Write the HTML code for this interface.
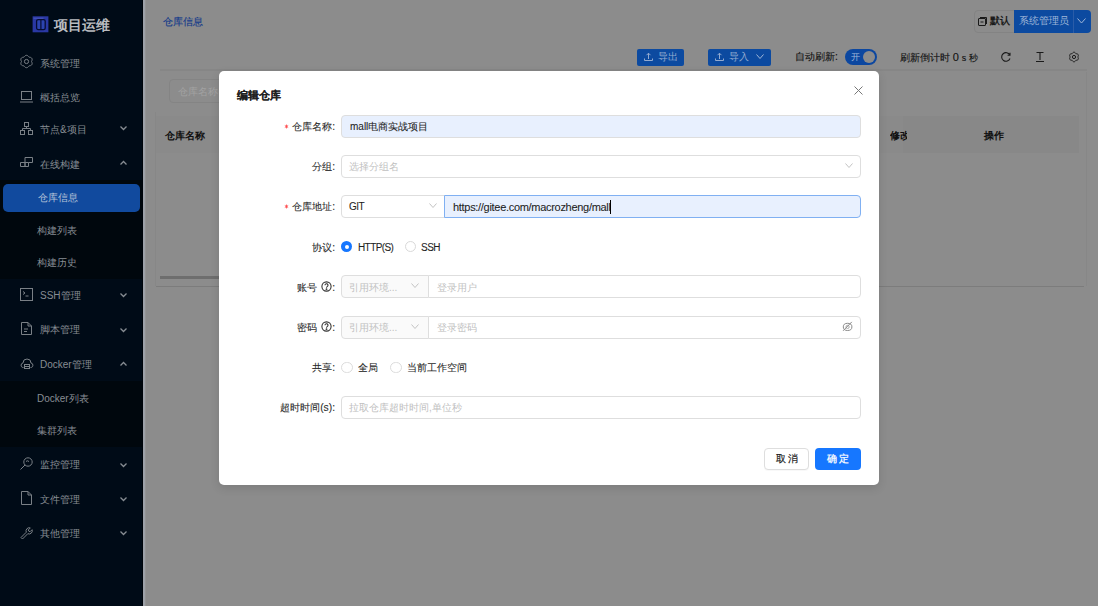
<!DOCTYPE html>
<html><head><meta charset="utf-8">
<style>
*{margin:0;padding:0;box-sizing:border-box;}
html,body{width:1098px;height:606px;overflow:hidden;background:#8c8c8c;font-family:"Liberation Sans",sans-serif;}
.a{position:absolute;}
.t{position:absolute;white-space:nowrap;line-height:14px;font-size:10px;}
#side{left:0;top:0;width:143px;height:606px;background:#000b17;}
.mi{color:#878d93;}
svg{position:absolute;overflow:visible;}
.lbl{color:#2a2a2a;text-align:right;font-size:10.3px;-webkit-text-stroke:0.08px #2a2a2a;}
.inp{position:absolute;border:1px solid #dedede;border-radius:4px;background:#fff;}
.ph{color:#bfbfbf;}
</style></head><body>
<!-- SIDEBAR -->
<div id="side" class="a">
  <div class="a" style="left:0;top:180px;width:144px;height:99px;background:#00070d"></div>
  <div class="a" style="left:0;top:381px;width:144px;height:66px;background:#00070d"></div>
  <!-- logo -->
  <svg style="left:32px;top:16px" width="17" height="17" viewBox="0 0 17 17">
    <rect x="0.6" y="0.3" width="15.8" height="16" fill="#2a38a4"/>
    <rect x="4.6" y="3.6" width="8.6" height="10" rx="1.6" stroke="#060d33" stroke-width="1.3" fill="#2c44b0"/>
    <path d="M8.9 4v9.4" stroke="#060d33" stroke-width="1.2"/>
    <path d="M1.5 2.2h10" stroke="#4c5cc0" stroke-width="0.9"/>
  </svg>
  <div class="t" style="left:54px;top:17px;font-size:14px;line-height:16px;font-weight:bold;color:#b9bcc0">项目运维</div>

  <!-- icons -->
  <g></g>
  <svg style="left:20px;top:55px" width="13" height="13" viewBox="0 0 13 13" fill="none" stroke="#7a8086" stroke-width="1">
    <path d="M6.50 0.30 L7.04 0.37 L7.54 0.58 L8.00 0.91 L8.39 1.31 L8.71 1.75 L9.00 2.17 L9.50 2.21 L10.05 2.27 L10.60 2.40 L11.10 2.64 L11.54 2.97 L11.87 3.40 L12.07 3.90 L12.15 4.44 L12.09 5.00 L11.94 5.54 L11.72 6.04 L11.50 6.50 L11.72 6.96 L11.94 7.46 L12.09 8.00 L12.15 8.56 L12.07 9.10 L11.87 9.60 L11.54 10.03 L11.10 10.36 L10.60 10.60 L10.05 10.73 L9.50 10.79 L9.00 10.83 L8.71 11.25 L8.39 11.69 L8.00 12.09 L7.54 12.42 L7.04 12.63 L6.50 12.70 L5.96 12.63 L5.46 12.42 L5.00 12.09 L4.61 11.69 L4.29 11.25 L4.00 10.83 L3.50 10.79 L2.95 10.73 L2.40 10.60 L1.90 10.36 L1.46 10.03 L1.13 9.60 L0.93 9.10 L0.85 8.56 L0.91 8.00 L1.06 7.46 L1.28 6.96 L1.50 6.50 L1.28 6.04 L1.06 5.54 L0.91 5.00 L0.85 4.44 L0.93 3.90 L1.13 3.40 L1.46 2.97 L1.90 2.64 L2.40 2.40 L2.95 2.27 L3.50 2.21 L4.00 2.17 L4.29 1.75 L4.61 1.31 L5.00 0.91 L5.46 0.58 L5.96 0.37Z"/>
    <circle cx="6.5" cy="6.5" r="2.1"/>
  </svg>
  <svg style="left:20px;top:91px" width="13" height="12" viewBox="0 0 13 12" fill="none" stroke="#7a8086" stroke-width="1">
    <rect x="1.5" y="0.5" width="10" height="8"/><path d="M0 11h13"/>
  </svg>
  <svg style="left:20px;top:122px" width="13" height="13" viewBox="0 0 13 13" fill="none" stroke="#7a8086" stroke-width="1">
    <rect x="4.5" y="0.5" width="4" height="4"/><rect x="0.5" y="8.5" width="4" height="4"/><rect x="8.5" y="8.5" width="4" height="4"/>
    <path d="M6.5 4.5v2M2.5 8.5v-2h8v2"/>
  </svg>
  <svg style="left:20px;top:157px" width="13" height="10" viewBox="0 0 13 10" fill="none" stroke="#7a8086" stroke-width="1">
    <path d="M0.5 9.5v-4h4.5v4zM5 9.5v-4M5 5.5h3.5v4H5M5 5.5V0.5h7.5v5H8.5"/>
  </svg>
  <svg style="left:20px;top:288px" width="13" height="13" viewBox="0 0 13 13" fill="none" stroke="#7a8086" stroke-width="1">
    <rect x="0.5" y="0.5" width="12" height="12"/><path d="M3 3.5l2 1.5-2 1.5M5.5 8h3"/>
  </svg>
  <svg style="left:21px;top:322px" width="11" height="13" viewBox="0 0 11 13" fill="none" stroke="#7a8086" stroke-width="1">
    <path d="M0.5 0.5h6.5l3.5 3.5v8.5h-10z M7 0.5v3.5h3.5 M3 7h4 M3 9.5h3"/>
  </svg>
  <svg style="left:20px;top:358px" width="14" height="12" viewBox="0 0 14 12" fill="none" stroke="#7a8086" stroke-width="1">
    <path d="M3.5 9.5H2.8A2.3 2.3 0 0 1 3 5 4 4 0 0 1 11 5a2.3 2.3 0 0 1 .2 4.5h-.7"/>
    <rect x="4.5" y="6.5" width="5" height="4"/><path d="M4.5 8.5h5"/>
  </svg>
  <svg style="left:20px;top:457px" width="13" height="13" viewBox="0 0 13 13" fill="none" stroke="#7a8086" stroke-width="1">
    <circle cx="8" cy="5" r="4.2"/><path d="M5 8l-4.5 4.5M6 4.5q1-1.5 3 0"/>
  </svg>
  <svg style="left:21px;top:491px" width="11" height="14" viewBox="0 0 11 14" fill="none" stroke="#7a8086" stroke-width="1">
    <path d="M0.5 0.5h6.5l3.5 3.5v9.5h-10z M7 0.5v3.5h3.5"/>
  </svg>
  <svg style="left:20px;top:526px" width="13" height="13" viewBox="0 0 13 13" fill="none" stroke="#7a8086" stroke-width="1">
    <path d="M1 11.5l5.3-5.3a3.2 3.2 0 0 1 4-4.3l-2 2 .5 1.3 1.3.5 2-2a3.2 3.2 0 0 1-4.3 4L2.5 13z"/>
  </svg>
  <!-- arrows -->
  <svg style="left:120px;top:126px" width="7" height="4" viewBox="0 0 7 4" fill="none" stroke="#878d93" stroke-width="1.3"><path d="M0.5 0.5l3 3 3-3"/></svg>
  <svg style="left:120px;top:161px" width="7" height="4" viewBox="0 0 7 4" fill="none" stroke="#878d93" stroke-width="1.3"><path d="M0.5 3.5l3-3 3 3"/></svg>
  <svg style="left:120px;top:293px" width="7" height="4" viewBox="0 0 7 4" fill="none" stroke="#878d93" stroke-width="1.3"><path d="M0.5 0.5l3 3 3-3"/></svg>
  <svg style="left:120px;top:328px" width="7" height="4" viewBox="0 0 7 4" fill="none" stroke="#878d93" stroke-width="1.3"><path d="M0.5 0.5l3 3 3-3"/></svg>
  <svg style="left:120px;top:362px" width="7" height="4" viewBox="0 0 7 4" fill="none" stroke="#878d93" stroke-width="1.3"><path d="M0.5 3.5l3-3 3 3"/></svg>
  <svg style="left:120px;top:463px" width="7" height="4" viewBox="0 0 7 4" fill="none" stroke="#878d93" stroke-width="1.3"><path d="M0.5 0.5l3 3 3-3"/></svg>
  <svg style="left:120px;top:497px" width="7" height="4" viewBox="0 0 7 4" fill="none" stroke="#878d93" stroke-width="1.3"><path d="M0.5 0.5l3 3 3-3"/></svg>
  <svg style="left:120px;top:531px" width="7" height="4" viewBox="0 0 7 4" fill="none" stroke="#878d93" stroke-width="1.3"><path d="M0.5 0.5l3 3 3-3"/></svg>

  <div class="t mi" style="left:40px;top:57px">系统管理</div>
  <div class="t mi" style="left:40px;top:91px">概括总览</div>
  <div class="t mi" style="left:40px;top:123px">节点&amp;项目</div>
  <div class="t mi" style="left:40px;top:158px">在线构建</div>
  <div class="a" style="left:3px;top:184px;width:137px;height:28px;background:#114a9e;border-radius:5px"></div>
  <div class="t" style="left:38px;top:191px;color:#b4c2d8">仓库信息</div>
  <div class="t mi" style="left:37px;top:224px">构建列表</div>
  <div class="t mi" style="left:37px;top:256px">构建历史</div>
  <div class="t mi" style="left:40px;top:289px">SSH管理</div>
  <div class="t mi" style="left:40px;top:323px">脚本管理</div>
  <div class="t mi" style="left:40px;top:358px">Docker管理</div>
  <div class="t mi" style="left:37px;top:392px">Docker列表</div>
  <div class="t mi" style="left:37px;top:424px">集群列表</div>
  <div class="t mi" style="left:40px;top:458px">监控管理</div>
  <div class="t mi" style="left:40px;top:493px">文件管理</div>
  <div class="t mi" style="left:40px;top:527px">其他管理</div>
</div>
<div class="a" style="left:142px;top:0;width:1px;height:606px;background:#00050b"></div><div class="a" style="left:143px;top:0;width:2px;height:606px;background:#9da1a8"></div><div class="a" style="left:145px;top:0;width:1px;height:606px;background:#939393"></div>

<!-- MAIN (dimmed) -->
<div class="t" style="left:163px;top:15px;color:#143a8a;-webkit-text-stroke:0.15px #143a8a">仓库信息</div>
<!-- top right buttons -->
<div class="a" style="left:974px;top:10px;width:41px;height:23px;border:1px solid #838383;border-radius:4px 0 0 4px"></div>
<svg style="left:978px;top:17px" width="9" height="9" viewBox="0 0 9 9" fill="none" stroke="#1a1a1a" stroke-width="1"><rect x="0.5" y="1.5" width="7" height="7" rx="0.5"/><path d="M2 0.5h6.5v6.5M2.5 5h3"/></svg>
<div class="t" style="left:990px;top:14px;color:#1a1a1a;font-weight:bold">默认</div>
<div class="a" style="left:1014px;top:10px;width:77px;height:23px;background:#0c4aa0;border-radius:0 4px 4px 0"></div>
<div class="a" style="left:1073px;top:10px;width:1px;height:23px;background:#2a5ca8"></div>
<div class="t" style="left:1019px;top:14px;color:#9fb6d8">系统管理员</div>
<svg style="left:1077px;top:18px" width="9" height="6" viewBox="0 0 9 6" fill="none" stroke="#9fb6d8" stroke-width="1"><path d="M0.5 0.5l4 4.5 4-4.5"/></svg>



<!-- toolbar -->
<div class="a" style="left:637px;top:49px;width:47px;height:17px;background:#0c4aa0;border-radius:2px"></div>
<svg style="left:644px;top:52px" width="9" height="9" viewBox="0 0 9 9" fill="none" stroke="#93aad0" stroke-width="1"><path d="M4.5 7V1.2M2.5 3.2l2-2 2 2M0.5 6.5v2h8v-2"/></svg>
<div class="t" style="left:658px;top:50px;color:#93aad0">导出</div>
<div class="a" style="left:708px;top:49px;width:63px;height:17px;background:#0c4aa0;border-radius:2px"></div>
<svg style="left:715px;top:52px" width="9" height="9" viewBox="0 0 9 9" fill="none" stroke="#93aad0" stroke-width="1"><path d="M4.5 7V1.2M2.5 3.2l2-2 2 2M0.5 6.5v2h8v-2"/></svg>
<div class="t" style="left:729px;top:50px;color:#93aad0">导入</div>
<svg style="left:756px;top:54px" width="8" height="5" viewBox="0 0 8 5" fill="none" stroke="#9fb6d8" stroke-width="1"><path d="M0.5 0.5l3.5 4 3.5-4"/></svg>
<div class="t" style="left:795px;top:50px;color:#111;font-size:10.3px;-webkit-text-stroke:0.1px #111">自动刷新:</div>
<div class="a" style="left:845px;top:49px;width:32px;height:16px;background:#0c47a0;border-radius:8px"></div>
<div class="a" style="left:863px;top:51px;width:12px;height:12px;background:#8c8c8c;border-radius:6px"></div>
<div class="t" style="left:851px;top:50px;color:#9fb6d8;font-size:9px">开</div>
<div class="t" style="left:900px;top:50px;color:#111;-webkit-text-stroke:0.1px #111">刷新倒计时 <span style="font-size:11px">0</span> <span style="font-size:9px">s</span> <span style="font-size:9px">秒</span></div>
<svg style="left:1001px;top:52px" width="10" height="10" viewBox="0 0 10 10" fill="none" stroke="#1a1a1a" stroke-width="1.1"><path d="M8.8 3A4.3 4.3 0 1 0 9 6.5M9 0.8V3.2H6.6"/></svg>
<svg style="left:1036px;top:52px" width="8" height="10" viewBox="0 0 8 10" fill="none" stroke="#1a1a1a" stroke-width="1.1"><path d="M0.5 0.5h7M4 0.5v7.5M0 9.5h8"/></svg>
<svg style="left:1069px;top:52px" width="10" height="10" viewBox="0 0 10 10" fill="none" stroke="#1a1a1a" stroke-width="1"><path d="M5.00 0.20 L5.41 0.26 L5.81 0.43 L6.15 0.69 L6.45 1.02 L6.69 1.38 L6.90 1.71 L7.29 1.73 L7.72 1.76 L8.15 1.85 L8.56 2.02 L8.90 2.27 L9.16 2.60 L9.31 2.99 L9.36 3.41 L9.31 3.85 L9.17 4.26 L8.98 4.65 L8.80 5.00 L8.98 5.35 L9.17 5.74 L9.31 6.15 L9.36 6.59 L9.31 7.01 L9.16 7.40 L8.90 7.73 L8.56 7.98 L8.15 8.15 L7.72 8.24 L7.29 8.27 L6.90 8.29 L6.69 8.62 L6.45 8.98 L6.15 9.31 L5.81 9.57 L5.41 9.74 L5.00 9.80 L4.59 9.74 L4.19 9.57 L3.85 9.31 L3.55 8.98 L3.31 8.62 L3.10 8.29 L2.71 8.27 L2.28 8.24 L1.85 8.15 L1.44 7.98 L1.10 7.73 L0.84 7.40 L0.69 7.01 L0.64 6.59 L0.69 6.15 L0.83 5.74 L1.02 5.35 L1.20 5.00 L1.02 4.65 L0.83 4.26 L0.69 3.85 L0.64 3.41 L0.69 2.99 L0.84 2.60 L1.10 2.27 L1.44 2.02 L1.85 1.85 L2.28 1.76 L2.71 1.73 L3.10 1.71 L3.31 1.38 L3.55 1.02 L3.85 0.69 L4.19 0.43 L4.59 0.26Z"/><circle cx="5" cy="5" r="1.6"/></svg>

<!-- search + table -->
<div class="a" style="left:169px;top:79px;width:60px;height:24px;border:1px solid #848484;border-radius:4px"></div>
<div class="t" style="left:178px;top:85px;color:#a2a2a2">仓库名称</div>
<div class="a" style="left:160px;top:69px;width:927px;height:2px;background:#868686"></div><div class="a" style="left:155px;top:112px;width:1px;height:174px;background:#878787"></div><div class="a" style="left:1086px;top:72px;width:1px;height:214px;background:#878787"></div>
<div class="a" style="left:156px;top:116px;width:750px;height:37px;background:#8a8a8a"></div>
<div class="a" style="left:903px;top:116px;width:176px;height:37px;background:#888"></div>
<div class="t" style="left:165px;top:129px;color:#111;font-weight:bold;font-size:10.3px">仓库名称</div>
<div class="a" style="left:890px;top:128px;width:17px;height:16px;overflow:hidden"><div class="t" style="left:0;top:1px;color:#111;font-weight:bold;font-size:10.3px">修改</div></div>
<div class="t" style="left:984px;top:129px;color:#111;font-weight:bold;font-size:10.3px">操作</div>
<div class="a" style="left:160px;top:276px;width:700px;height:3px;background:#6e6e6e"></div>
<div class="a" style="left:156px;top:286px;width:928px;height:1px;background:#7c7c7c"></div>
<!-- MODAL -->
<div class="a" id="modal" style="left:219px;top:71px;width:660px;height:414px;background:#fff;border-radius:5px;box-shadow:0 3px 10px rgba(0,0,0,0.12)">
  <div class="t" style="left:18px;top:16px;font-size:11.1px;line-height:16px;font-weight:bold;color:#1f1f1f;-webkit-text-stroke:0.08px #1f1f1f">编辑仓库</div>
  <svg style="left:635px;top:15px" width="9" height="9" viewBox="0 0 9 9" fill="none" stroke="#777" stroke-width="1"><path d="M0.5 0.5l8 8M8.5 0.5l-8 8"/></svg>
</div>

<!-- FORM -->
<svg style="left:284px;top:124px" width="5" height="5" viewBox="0 0 5 5" fill="none" stroke="#ff4d4f" stroke-width="0.9"><path d="M2.5 0.6v3.8M0.85 1.55l3.3 1.9M0.85 3.45l3.3-1.9"/></svg>
<div class="t lbl" style="left:275px;width:60px;top:120px">仓库名称:</div>
<div class="inp" style="left:341px;top:115px;width:520px;height:23px;background:#e8f0fe"></div>
<div class="t" style="left:350px;top:120px;color:#1f1f1f;-webkit-text-stroke:0.08px #1f1f1f">mall电商实战项目</div>

<div class="t lbl" style="left:275px;width:60px;top:160px">分组:</div>
<div class="inp" style="left:341px;top:155px;width:520px;height:23px"></div>
<div class="t ph" style="left:349px;top:160px">选择分组名</div>
<svg style="left:845px;top:163px" width="8" height="5" viewBox="0 0 8 5" fill="none" stroke="#c4c4c4" stroke-width="1"><path d="M0.5 0.5l3.5 4 3.5-4"/></svg>

<svg style="left:284px;top:204px" width="5" height="5" viewBox="0 0 5 5" fill="none" stroke="#ff4d4f" stroke-width="0.9"><path d="M2.5 0.6v3.8M0.85 1.55l3.3 1.9M0.85 3.45l3.3-1.9"/></svg>
<div class="t lbl" style="left:275px;width:60px;top:200px">仓库地址:</div>
<div class="inp" style="left:341px;top:195px;width:104px;height:23px;border-radius:4px 0 0 4px"></div>
<div class="t" style="left:349px;top:200px;color:#1f1f1f;-webkit-text-stroke:0.08px #1f1f1f;letter-spacing:-0.5px">GIT</div>
<svg style="left:429px;top:203px" width="8" height="5" viewBox="0 0 8 5" fill="none" stroke="#c4c4c4" stroke-width="1"><path d="M0.5 0.5l3.5 4 3.5-4"/></svg>
<div class="inp" style="left:444px;top:195px;width:417px;height:23px;background:#e8f0fe;border-color:#80b0f2;border-radius:0 4px 4px 0"></div>
<div class="t" style="left:453px;top:200px;color:#1f1f1f;-webkit-text-stroke:0.08px #1f1f1f;font-size:11px;letter-spacing:-0.3px">https://gitee.com/macrozheng/mall</div>
<div class="a" style="left:610px;top:200px;width:1px;height:14px;background:#000"></div>

<div class="t lbl" style="left:275px;width:60px;top:241px">协议:</div>
<div class="a" style="left:341px;top:241px;width:11px;height:11px;border-radius:50%;background:#1677ff"></div>
<div class="a" style="left:344.5px;top:244.5px;width:4px;height:4px;border-radius:50%;background:#fff"></div>
<div class="t" style="left:358px;top:241px;color:#1f1f1f;-webkit-text-stroke:0.08px #1f1f1f;letter-spacing:-0.6px">HTTP(S)</div>
<div class="a" style="left:405px;top:241px;width:11px;height:11px;border-radius:50%;border:1px solid #d9d9d9"></div>
<div class="t" style="left:421px;top:241px;color:#1f1f1f;-webkit-text-stroke:0.08px #1f1f1f;letter-spacing:-0.5px">SSH</div>

<div class="t lbl" style="left:257px;width:60px;top:281px">账号</div><div class="t lbl" style="left:325px;width:10px;top:281px">:</div>
<svg style="left:321px;top:281px" width="11" height="11" viewBox="0 0 11 11" fill="none" stroke="#333" stroke-width="1.1"><circle cx="5.5" cy="5.5" r="4.6"/><path d="M4 4.3a1.5 1.5 0 1 1 2.2 1.3c-.5.3-.7.6-.7 1.2" /><circle cx="5.5" cy="8.2" r="0.35" fill="#444"/></svg>
<div class="inp" style="left:341px;top:275px;width:88px;height:23px;background:#fafafa;border-radius:4px 0 0 4px"></div>
<div class="t ph" style="left:349px;top:281px">引用环境...</div>
<svg style="left:411px;top:283px" width="8" height="5" viewBox="0 0 8 5" fill="none" stroke="#c4c4c4" stroke-width="1"><path d="M0.5 0.5l3.5 4 3.5-4"/></svg>
<div class="inp" style="left:428px;top:275px;width:433px;height:23px;border-radius:0 4px 4px 0"></div>
<div class="t ph" style="left:437px;top:281px">登录用户</div>

<div class="t lbl" style="left:257px;width:60px;top:321px">密码</div><div class="t lbl" style="left:325px;width:10px;top:321px">:</div>
<svg style="left:321px;top:321px" width="11" height="11" viewBox="0 0 11 11" fill="none" stroke="#333" stroke-width="1.1"><circle cx="5.5" cy="5.5" r="4.6"/><path d="M4 4.3a1.5 1.5 0 1 1 2.2 1.3c-.5.3-.7.6-.7 1.2" /><circle cx="5.5" cy="8.2" r="0.35" fill="#444"/></svg>
<div class="inp" style="left:341px;top:316px;width:88px;height:23px;background:#fafafa;border-radius:4px 0 0 4px"></div>
<div class="t ph" style="left:349px;top:321px">引用环境...</div>
<svg style="left:411px;top:324px" width="8" height="5" viewBox="0 0 8 5" fill="none" stroke="#c4c4c4" stroke-width="1"><path d="M0.5 0.5l3.5 4 3.5-4"/></svg>
<div class="inp" style="left:428px;top:316px;width:433px;height:23px;border-radius:0 4px 4px 0"></div>
<div class="t ph" style="left:437px;top:321px">登录密码</div>
<svg style="left:842px;top:321px" width="11" height="11" viewBox="0 0 11 11" fill="none" stroke="#8a8a8a" stroke-width="1"><ellipse cx="5.6" cy="5.9" rx="4.3" ry="3.6"/><circle cx="5.6" cy="5.9" r="1.6" stroke="#aaa"/><path d="M1.1 9.8L9.8 0.9"/></svg>

<div class="t lbl" style="left:275px;width:60px;top:361px">共享:</div>
<div class="a" style="left:341px;top:361.5px;width:11.5px;height:11.5px;border-radius:50%;border:1px solid #dcdcdc"></div>
<div class="t" style="left:358px;top:361px;color:#1f1f1f;-webkit-text-stroke:0.08px #1f1f1f">全局</div>
<div class="a" style="left:390px;top:361.5px;width:11.5px;height:11.5px;border-radius:50%;border:1px solid #dcdcdc"></div>
<div class="t" style="left:407px;top:361px;color:#1f1f1f;-webkit-text-stroke:0.08px #1f1f1f">当前工作空间</div>

<div class="t lbl" style="left:255px;width:80px;top:401px">超时时间(s):</div>
<div class="inp" style="left:341px;top:396px;width:520px;height:23px"></div>
<div class="t ph" style="left:349px;top:401px">拉取仓库超时时间,单位秒</div>

<div class="a" style="left:764px;top:448px;width:45px;height:22px;border:1px solid #dedede;border-radius:4px;background:#fff;box-shadow:0 1px 1px rgba(0,0,0,0.03)"></div>
<div class="t" style="left:765px;top:452px;width:45px;text-align:center;color:#1f1f1f;-webkit-text-stroke:0.2px #1f1f1f;letter-spacing:2px">取消</div>
<div class="a" style="left:815px;top:448px;width:46px;height:22px;border-radius:4px;background:#1677ff"></div>
<div class="t" style="left:815.5px;top:452px;width:46px;text-align:center;color:#fff;-webkit-text-stroke:0.25px #fff;letter-spacing:2px">确定</div>
</body></html>
